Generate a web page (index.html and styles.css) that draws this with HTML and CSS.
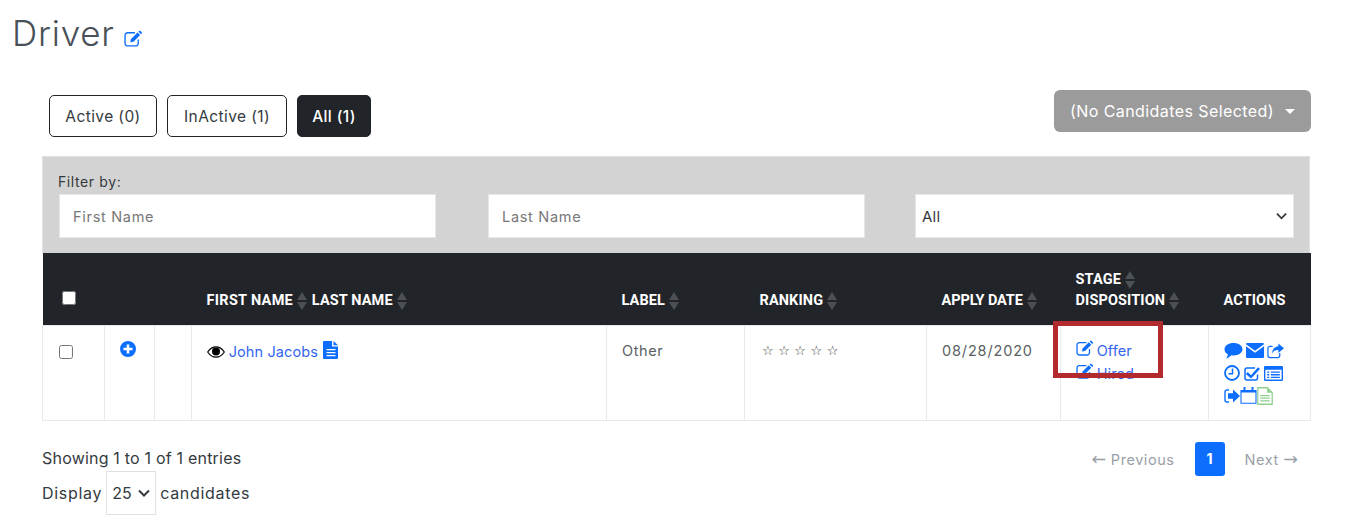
FILE: index.html
```html
<!DOCTYPE html>
<html lang="en">
<head>
<meta charset="utf-8">
<title>Driver</title>
<link rel="stylesheet" href="styles.css">
</head>
<body>
<svg class="defs" width="0" height="0" aria-hidden="true">
  <symbol id="i-edit" viewBox="0 0 18 16">
    <path d="M13.500 9v3.600a2.400 2.400 0 0 1-2.400 2.400H3.400A2.400 2.400 0 0 1 1 12.600V5a2.400 2.400 0 0 1 2.400-2.400h7" fill="none" stroke="currentColor" stroke-width="1.300"/>
    <path d="M6.500 8.600 12.800 2.300l2.500 2.500-6.300 6.300-3 .5zM13.600 1.500l.6-.6a1 1 0 0 1 1.400 0l1.100 1.100a1 1 0 0 1 0 1.400l-.6.600z" fill="currentColor"/>
  </symbol>
  <symbol id="i-sort" viewBox="0 0 10 18">
    <path d="M5 0 10 8H0zM5 18 0 10h10z" fill="currentColor"/>
  </symbol>
  <symbol id="i-plus" viewBox="0 0 16 16">
    <path fill-rule="evenodd" d="M8 0a8 8 0 1 1 0 16A8 8 0 0 1 8 0zM6.700 3.500v3.200H3.500v2.600h3.200v3.200h2.600V9.300h3.200V6.700H9.300V3.500z" fill="currentColor"/>
  </symbol>
  <symbol id="i-doc" viewBox="0 0 16 18">
    <path fill-rule="evenodd" d="M1 0h8v5.500h6V17a1 1 0 0 1-1 1H1a1 1 0 0 1-1-1V1a1 1 0 0 1 1-1zM3.500 8v1.300h9V8zm0 3v1.300h9V11zm0 3v1.300h9V14zM10.500 0 15 4.200h-4.500z" fill="currentColor"/>
  </symbol>
  <symbol id="i-eye" viewBox="0 0 18 12">
    <path d="M.7 6C3 2.500 5.800.8 9 .8s6 1.700 8.300 5.200C15 9.500 12.200 11.200 9 11.200S3 9.500.7 6z" fill="none" stroke="currentColor" stroke-width="1.200"/>
    <circle cx="9" cy="5.600" r="4" fill="currentColor"/>
  </symbol>
  <symbol id="i-chat" viewBox="0 0 18 16">
    <path d="M9 0c5 0 9 2.600 9 6.200s-4 6.200-9 6.200c-.8 0-1.500 0-2.200-.2C5.500 13.800 3.500 15 1.500 15.500c1-1.100 1.700-2.500 1.800-4.200C1.300 10.200 0 8.300 0 6.200 0 2.600 4 0 9 0z" fill="currentColor"/>
  </symbol>
  <symbol id="i-mail" viewBox="0 0 18 15">
    <path d="M1.300 0h15.400c.7 0 1.300.6 1.300 1.300L9 7.800 0 1.300C0 .6.600 0 1.300 0zM0 3.200l9 6.500 9-6.500v10.500c0 .7-.6 1.300-1.300 1.300H1.300C.6 15 0 14.400 0 13.700z" fill="currentColor"/>
  </symbol>
  <symbol id="i-share" viewBox="0 0 18 16">
    <path d="M13.500 10v2.800a2.200 2.200 0 0 1-2.200 2.200H3.200A2.200 2.200 0 0 1 1 12.800V5.200A2.200 2.200 0 0 1 3.200 3H6" fill="none" stroke="currentColor" stroke-width="1.300"/>
    <path d="M12 0l6 5-6 5V7C8.500 7 6.500 8 5.500 11 5.500 6.500 8 3.300 12 3z" fill="currentColor"/>
  </symbol>
  <symbol id="i-clock" viewBox="0 0 16 16">
    <circle cx="8" cy="8" r="7" fill="none" stroke="currentColor" stroke-width="1.800"/>
    <path d="M8.500 3.500v5.200H4.500" fill="none" stroke="currentColor" stroke-width="1.500"/>
  </symbol>
  <symbol id="i-check" viewBox="0 0 16 15">
    <path d="M13.500 8.500v3.500a2 2 0 0 1-2 2H3a2 2 0 0 1-2-2V4a2 2 0 0 1 2-2h8" fill="none" stroke="currentColor" stroke-width="1.500"/>
    <path d="M3.800 6 7 9.200 14 1.300l2 1.800L7 12.500 1.800 7.900z" fill="currentColor"/>
  </symbol>
  <symbol id="i-list" viewBox="0 0 18 14">
    <path fill-rule="evenodd" d="M1 0h16a1 1 0 0 1 1 1v12a1 1 0 0 1-1 1H1a1 1 0 0 1-1-1V1a1 1 0 0 1 1-1zM1.300 3.500v9.200h15.400V3.500zM3 5h2v1.300H3zm3.500 0H15v1.300H6.500zM3 7.500h2v1.300H3zm3.500 0H15v1.300H6.500zM3 10h2v1.300H3zm3.500 0H15v1.300H6.500z" fill="currentColor"/>
  </symbol>
  <symbol id="i-signin" viewBox="0 0 16 14">
    <path d="M5 1H3a2 2 0 0 0-2 2v8a2 2 0 0 0 2 2h2" fill="none" stroke="currentColor" stroke-width="1.400"/>
    <path d="M9 .5l7 6.500-7 6.500V9.800H4V4.200h5z" fill="currentColor"/>
  </symbol>
  <symbol id="i-cal" viewBox="0 0 17 17">
    <path d="M1 3.500h15v12.800H1z" fill="#fff" stroke="currentColor" stroke-width="1.100"/>
    <path d="M1 3h15v2.500H1zM3.500 0h2v4.500h-2zM11.500 0h2v4.500h-2z" fill="currentColor"/>
  </symbol>
  <symbol id="i-note" viewBox="0 0 15 17">
    <path d="M.7.700h9l4.600 4.600v11H.7z" fill="#fff" stroke="currentColor" stroke-width="1.200"/>
    <path d="M9.500.700v4.800h4.800zM3 7.500h9v1.200H3zM3 10h9v1.200H3zM3 12.500h9v1.200H3z" fill="currentColor"/>
  </symbol>
</svg>

<main class="page">
  <h1 class="title">Driver <svg class="ico ico-title"><use href="#i-edit"/></svg></h1>

  <div class="toolbar">
    <div class="tabs">
      <button class="tab tab-active-count">Active (0)</button>
      <button class="tab tab-inactive-count">InActive (1)</button>
      <button class="tab tab-current">All (1)</button>
    </div>
    <button class="bulk">(No Candidates Selected) <span class="caret"></span></button>
  </div>

  <section class="panel">
    <div class="filters">
      <label class="filter-label">Filter by:</label>
      <div class="filter-grid">
        <input class="field" type="text" placeholder="First Name">
        <input class="field field-mid" type="text" placeholder="Last Name">
        <select class="field field-select"><option>All</option></select>
      </div>
    </div>

    <table class="grid">
      <colgroup>
        <col class="c1"><col class="c2"><col class="c3"><col class="c4"><col class="c5"><col class="c6"><col class="c7"><col class="c8"><col class="c9">
      </colgroup>
      <thead>
        <tr>
          <th class="th-check"><input class="check check-head" type="checkbox"></th>
          <th></th>
          <th></th>
          <th><span class="nowrap first-name">FIRST NAME<svg class="sort"><use href="#i-sort"/></svg></span> <span class="nowrap last-name">LAST NAME<svg class="sort"><use href="#i-sort"/></svg></span></th>
          <th>LABEL<svg class="sort"><use href="#i-sort"/></svg></th>
          <th>RANKING<svg class="sort"><use href="#i-sort"/></svg></th>
          <th class="th-date">APPLY DATE<svg class="sort"><use href="#i-sort"/></svg></th>
          <th class="th-stage">STAGE<svg class="sort"><use href="#i-sort"/></svg><br>DISPOSITION<svg class="sort"><use href="#i-sort"/></svg></th>
          <th>ACTIONS</th>
        </tr>
      </thead>
      <tbody>
        <tr>
          <td class="td-check"><input class="check" type="checkbox"></td>
          <td class="td-plus"><svg class="ico ico-plus"><use href="#i-plus"/></svg></td>
          <td></td>
          <td class="td-name"><svg class="ico ico-eye"><use href="#i-eye"/></svg> <a class="link" href="#">John Jacobs</a> <svg class="ico ico-doc"><use href="#i-doc"/></svg></td>
          <td>Other</td>
          <td class="stars">☆ ☆ ☆ ☆ ☆</td>
          <td class="date">08/28/2020</td>
          <td class="td-stage">
            <div class="stage-line"><svg class="ico ico-edit"><use href="#i-edit"/></svg> <a class="link" href="#">Offer</a></div>
            <div class="stage-line"><svg class="ico ico-edit"><use href="#i-edit"/></svg> <a class="link" href="#">Hired</a></div>
            <div class="highlight"></div>
          </td>
          <td class="td-actions">
            <div class="action-row">
              <svg class="act act-chat"><use href="#i-chat"/></svg>
              <svg class="act act-mail"><use href="#i-mail"/></svg>
              <svg class="act act-share"><use href="#i-share"/></svg>
            </div>
            <div class="action-row">
              <svg class="act act-clock"><use href="#i-clock"/></svg>
              <svg class="act act-check"><use href="#i-check"/></svg>
              <svg class="act act-list"><use href="#i-list"/></svg>
            </div>
            <div class="action-row">
              <svg class="act act-signin"><use href="#i-signin"/></svg>
              <svg class="act act-cal"><use href="#i-cal"/></svg>
              <svg class="act act-note"><use href="#i-note"/></svg>
            </div>
          </td>
        </tr>
      </tbody>
    </table>
  </section>

  <footer class="foot">
    <div class="foot-info">
      <div class="showing">Showing 1 to 1 of 1 entries</div>
      <div class="display">Display <select class="per-page"><option>25</option></select> candidates</div>
    </div>
    <nav class="pager">
      <span class="pager-link"><span class="arrow">←</span> Previous</span>
      <span class="pager-num">1</span>
      <span class="pager-link">Next <span class="arrow">→</span></span>
    </nav>
  </footer>
</main>
</body>
</html>
```

FILE: styles.css
```css
* { box-sizing: border-box; }
html, body { margin: 0; padding: 0; background: #fff; }
body {
  font-family: "Inter", "Liberation Sans", sans-serif;
  color: #212529;
  font-size: 15px;
  height: 524px;
  overflow: hidden;
}
.defs { position: absolute; }
.page { padding: 12px 40px 0 42px; }
.ico { display: inline-block; }

.title {
  margin: 0 0 0 -30px;
  font-weight: 300;
  font-size: 35px;
  line-height: 42px;
  letter-spacing: .8px;
  color: #495057;
}
.ico-title { width: 19px; height: 17px; color: #0d6efd; margin-left: -1px; vertical-align: -1px; }

.toolbar {
  display: flex;
  justify-content: space-between;
  align-items: flex-start;
  margin-top: 36px;
}
.tabs { display: flex; gap: 10px; padding: 5px 0 0 7px; }
.tab {
  height: 42px;
  border: 1px solid #212529;
  border-radius: 5px;
  background: #fff;
  color: #343a40;
  font: 400 15.5px "Inter", sans-serif;
  letter-spacing: .4px;
  padding: 0;
}
.tab-active-count { width: 108px; }
.tab-inactive-count { width: 120px; }
.tab-current { width: 74px; background: #212529; color: #fff; font-weight: 500; }
.bulk {
  width: 257px;
  height: 42px;
  margin-right: -1px;
  border: 0;
  border-radius: 6px;
  background: #9b9b9b;
  color: #fff;
  font: 400 16px "Inter", sans-serif;
  letter-spacing: .42px;
  display: flex;
  align-items: center;
  justify-content: space-between;
  padding: 0 16px;
}
.caret {
  width: 0; height: 0;
  border-left: 5px solid transparent;
  border-right: 5px solid transparent;
  border-top: 5px solid #fff;
}

.panel { margin-top: 19px; width: 1268px; }
.filters {
  background: #d3d3d3;
  border: 1px solid #dee2e6;
  border-bottom: 0;
  height: 97px;
  padding: 15px 15px 0;
}
.filter-label { display: block; font-size: 14px; line-height: 20px; margin-bottom: 2px; color: #343a40; letter-spacing: .6px; }
.filter-grid {
  display: grid;
  grid-template-columns: 377px 379px 379px;
  column-gap: 50px;
  padding-left: 1px;
}
.field {
  height: 44px;
  width: 100%;
  border: 1px solid #e6e6e6;
  background: #fff;
  padding: 0 13px;
  font: 400 14.5px "Inter", sans-serif;
  letter-spacing: .7px;
  color: #212529;
  border-radius: 0;
  outline: 0;
}
.field-mid { width: 377px; justify-self: end; }
.field::placeholder { color: #777; }
.field-select,
.per-page {
  appearance: none;
  background-image: url("data:image/svg+xml,%3Csvg xmlns='http://www.w3.org/2000/svg' viewBox='0 0 12 8'%3E%3Cpath d='M1 1.500l5 5 5-5' fill='none' stroke='%23343a40' stroke-width='2'/%3E%3C/svg%3E");
  background-repeat: no-repeat;
}
.field-select {
  padding: 0 0 0 6px;
  font-size: 15px;
  letter-spacing: .2px;
  color: #343a40;
  background-size: 11px 8px;
  background-position: right 6px center;
}

.grid { width: 1268px; border-collapse: collapse; table-layout: fixed; }
.c1 { width: 62px; } .c2 { width: 50px; } .c3 { width: 37px; } .c4 { width: 415px; }
.c5 { width: 138px; } .c6 { width: 182px; } .c7 { width: 134px; } .c8 { width: 148px; } .c9 { width: 102px; }

thead tr { background: #212529; height: 72px; }
th {
  text-align: left;
  vertical-align: bottom;
  color: #fff;
  font: 700 14.5px/21px "Roboto", "Inter", sans-serif;
  letter-spacing: .12px;
  padding: 0 15px 14px;
  white-space: nowrap;
}
.th-check { padding-left: 19px; padding-bottom: 20px; }
.th-date { letter-spacing: -.1px; }
.nowrap { white-space: nowrap; }
.first-name { letter-spacing: .3px; }
.last-name { margin-left: 1px; }
.sort { width: 10px; height: 18px; color: #4c5055; vertical-align: -5px; margin-left: 4px; }
.check { display: block; width: 14px; height: 14px; margin: 0; }

tbody tr { height: 95px; }
td {
  border: 1px solid #e6eaee;
  vertical-align: top;
  padding: 15px 15px 0;
  font-size: 14.5px;
  line-height: 20px;
  letter-spacing: .6px;
  color: #5a5f64;
}
.date { letter-spacing: .85px; }
.td-check { padding: 19px 0 0 16px; }
.td-plus { padding: 15px 0 0 15px; color: #0d6efd; }
.ico-plus { width: 16px; height: 16px; display: block; }
.ico-eye { width: 18px; height: 12px; color: #000; vertical-align: -1px; margin-right: -1px; }
.ico-doc { width: 16px; height: 18px; color: #0d6efd; vertical-align: -2px; }
.link { color: #3366ee; text-decoration: none; letter-spacing: .1px; }
.stars {
  font-size: 13px;
  letter-spacing: .2px;
  font-family: "DejaVu Sans", sans-serif;
  color: #333;
  padding-left: 17px;
}

.td-stage { position: relative; padding-top: 14px; }
.stage-line { height: 23px; white-space: nowrap; }
.ico-edit { width: 18px; height: 16px; color: #0d6efd; vertical-align: 0; margin-right: -2px; }
.highlight {
  position: absolute;
  left: -8px;
  top: -5px;
  width: 110px;
  height: 57px;
  border: 5px solid #b22a2e;
}

.td-actions { padding: 14px 0 0 15px; }
.action-row { display: flex; align-items: center; height: 22.5px; }
.act { display: block; color: #0d6efd; }
.act-chat { width: 19px; height: 16px; margin-right: 3px; }
.act-mail { width: 18px; height: 15px; margin-right: 3px; }
.act-share { width: 17px; height: 16px; }
.act-clock { width: 16px; height: 16px; margin-right: 4px; }
.act-check { width: 16px; height: 15px; margin-right: 4px; }
.act-list { width: 19px; height: 15px; }
.act-signin { width: 16px; height: 14px; }
.act-cal { width: 17px; height: 17px; }
.act-note { width: 16px; height: 18px; color: #8fd08f; }

.foot { display: flex; justify-content: space-between; }
.foot-info { padding-top: 25px; font-size: 16px; color: #343a40; }
.showing { line-height: 24px; letter-spacing: .2px; }
.display { margin-top: 1px; display: flex; align-items: center; gap: 4px; line-height: 24px; letter-spacing: .7px; }
.per-page {
  width: 50px;
  height: 44px;
  border: 1px solid #e0e0e0;
  background-color: #fff;
  background-size: 12px 8px;
  background-position: right 5px center;
  font: 400 16px "Inter", sans-serif;
  color: #343a40;
  padding: 0 0 0 5px;
  border-radius: 0;
}
.pager {
  display: flex;
  align-items: center;
  gap: 20px;
  height: 34px;
  margin-top: 21px;
  margin-right: 12px;
}
.pager-link { font-size: 14.5px; letter-spacing: .55px; color: #9aa0a8; padding-top: 2px; line-height: 20px; }
.arrow { font-family: "DejaVu Sans", sans-serif; font-size: 17.5px; letter-spacing: 0; line-height: 0; }
.pager-num {
  width: 30px;
  height: 34px;
  border-radius: 3px;
  background: #0d6efd;
  color: #fff;
  font-weight: 700;
  font-size: 14px;
  display: flex;
  align-items: center;
  justify-content: center;
}
```
